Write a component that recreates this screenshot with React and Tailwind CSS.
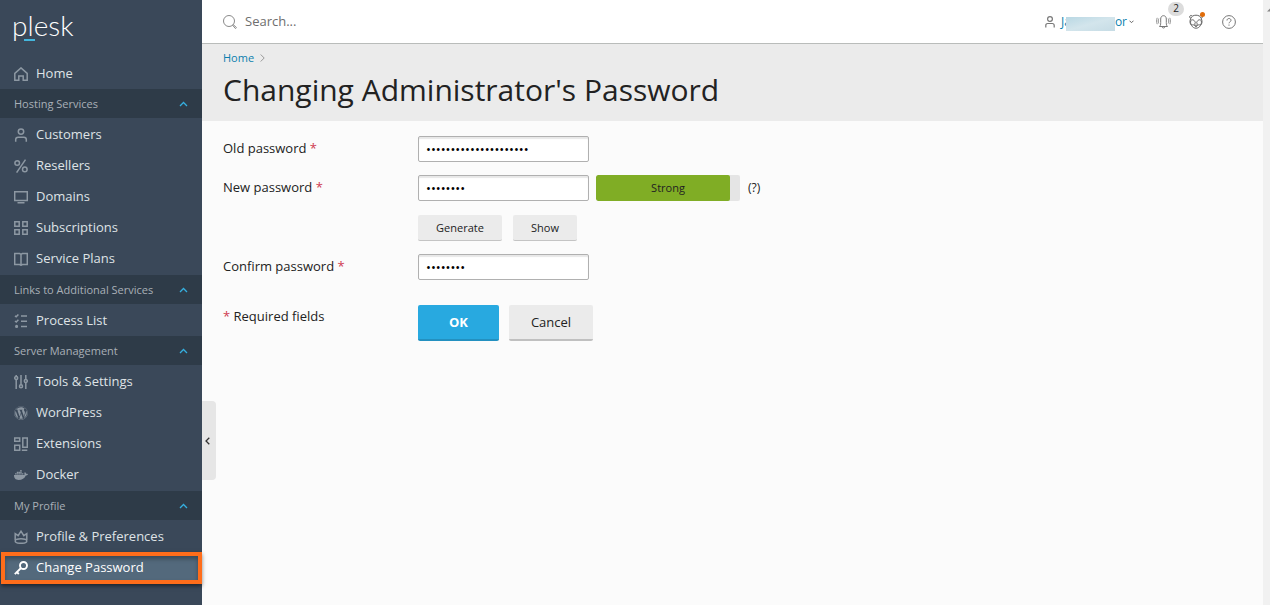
import React from 'react';
import { FaWordpress, FaDocker } from 'react-icons/fa';

const iconProps = {
  width: 14,
  height: 14,
  viewBox: '0 0 14 14',
  fill: 'none',
  stroke: 'currentColor',
  strokeWidth: 1.5,
  className: 'shrink-0',
  'aria-hidden': true
};

const HomeIcon = () => (
  <svg {...iconProps}>
    <path d="M.8 13.2V6.4L7 .9l6.2 5.5v6.8H9.2V9H4.8v4.2z" />
  </svg>
);

const UserIcon = () => (
  <svg {...iconProps}>
    <circle cx="7" cy="3.6" r="2.7" />
    <path d="M1.7 13.8v-2.3c0-1.4 1-2.3 2.4-2.3h5.8c1.4 0 2.4.9 2.4 2.3v2.3" />
  </svg>
);

const PercentIcon = () => (
  <svg {...iconProps}>
    <circle cx="3.2" cy="4" r="2.3" />
    <circle cx="10.8" cy="10.4" r="2.3" />
    <path d="M11.5.6 2.6 13.6" />
  </svg>
);

const ScreenIcon = () => (
  <svg {...iconProps}>
    <path d="M.7 1.7h12.6v8.8H.7zM3.5 12.7h7" />
  </svg>
);

const GridIcon = () => (
  <svg {...iconProps}>
    <path d="M.8.8h4.4v4.4H.8zM8.8.8h4.4v4.4H8.8zM.8 8.8h4.4v4.4H.8zM8.8 8.8h4.4v4.4H8.8z" />
  </svg>
);

const BookIcon = () => (
  <svg {...iconProps}>
    <path d="M.7 1.5h5l1.3.8 1.3-.8h5v11h-5l-1.3.8-1.3-.8h-5zM7 2.3v11" />
  </svg>
);

const ListIcon = () => (
  <svg {...iconProps}>
    <path d="M7 2h6M7 7.2h6M7 12.4h6M1 1.8l1.2 1L4.4.5M1 7l1.2 1 2.2-2.3" />
    <circle cx="2.6" cy="12.4" r=".8" />
  </svg>
);

const SlidersIcon = () => (
  <svg {...iconProps}>
    <circle cx="2.2" cy="3" r="1.5" />
    <circle cx="7" cy="11.3" r="1.5" />
    <circle cx="11.8" cy="6" r="1.5" />
    <path d="M2.2 4.5V14M2.2 0v1.5M7 0v9.8M11.8 0v4.5M11.8 7.5V14" />
  </svg>
);

const ExtensionsIcon = () => (
  <svg {...iconProps}>
    <path d="M.7.9h5v3.4h-5zM.7 8.2h5v5h-5zM8.8.9h4.5v9.3H8.8zM7.8 13.2h5.5" />
  </svg>
);

const CrownIcon = () => (
  <svg {...iconProps}>
    <path d="M1.2 10V3.6l3 2L7 1.2l2.8 4.4 3-2V10" />
    <ellipse cx="7" cy="11" rx="5.8" ry="2.3" />
  </svg>
);

const KeyIcon = () => (
  <svg {...iconProps} strokeWidth="1.9">
    <circle cx="9.5" cy="4.5" r="3.5" />
    <path d="M7 7 .8 13.2M2.2 10.4l2.6 2.6" />
  </svg>
);

const WordPressIcon = () => <FaWordpress size={14} className="shrink-0" aria-hidden />;
const DockerIcon = () => <FaDocker size={14} className="shrink-0" aria-hidden />;

const sections = [
  {
    title: 'Hosting Services',
    items: [
      { label: 'Customers', icon: UserIcon },
      { label: 'Resellers', icon: PercentIcon },
      { label: 'Domains', icon: ScreenIcon },
      { label: 'Subscriptions', icon: GridIcon },
      { label: 'Service Plans', icon: BookIcon }
    ]
  },
  {
    title: 'Links to Additional Services',
    items: [{ label: 'Process List', icon: ListIcon }]
  },
  {
    title: 'Server Management',
    items: [
      { label: 'Tools & Settings', icon: SlidersIcon },
      { label: 'WordPress', icon: WordPressIcon },
      { label: 'Extensions', icon: ExtensionsIcon },
      { label: 'Docker', icon: DockerIcon }
    ]
  },
  {
    title: 'My Profile',
    items: [
      { label: 'Profile & Preferences', icon: CrownIcon },
      { label: 'Change Password', icon: KeyIcon, active: true }
    ]
  }
];

const NavItem = ({ label, icon: Icon, active }) => (
  <a
    href="#"
    className={`flex items-center gap-2 text-[13px] ${
      active
        ? 'ml-px h-8 border-4 border-[#ff6d1a] bg-[#53697c] pl-[9px] text-white shadow-[0_2px_4px_rgba(0,0,0,0.5),inset_0_3px_4px_rgba(0,0,0,0.3)]'
        : 'h-[31px] pl-3.5 text-[#dfe3e6]'
    }`}
  >
    <span className={active ? 'text-white' : 'text-[#8d98a3]'}>
      <Icon />
    </span>
    {label}
  </a>
);

const Sidebar = () => (
  <aside className="relative w-[202px] shrink-0 bg-[#3a4859]">
    <a href="#" aria-label="plesk" className="block h-[58px] pt-[7px] pl-3 text-white">
      <span className="relative inline-block font-['Lato'] text-[28px] leading-9 font-light">
        plesk
        <span className="absolute bottom-0.5 left-3 h-0.5 w-[11px] bg-[#44b6dd]" />
      </span>
    </a>
    <nav>
      <NavItem label="Home" icon={HomeIcon} />
      {sections.map((section) => (
        <section key={section.title}>
          <button
            type="button"
            className="flex h-[29px] w-full items-center justify-between bg-[#2e3b48] px-3.5 pt-px text-[11px] text-[#a9b0b7]"
          >
            {section.title}
            <svg width="9" height="6" viewBox="0 0 9 6" fill="none" stroke="#35b0e0" strokeWidth="1.3" aria-hidden="true">
              <path d="M1 5l3.5-3.5L8 5" />
            </svg>
          </button>
          <ul className={section.items.length > 1 ? 'py-px' : 'pt-px'}>
            {section.items.map((item) => (
              <li key={item.label}>
                <NavItem {...item} />
              </li>
            ))}
          </ul>
        </section>
      ))}
    </nav>
    <button
      type="button"
      aria-label="Collapse sidebar"
      className="absolute top-[401px] left-full flex h-[79px] w-3.5 items-center rounded-r-sm bg-[#e6e6e6] pl-[3px]"
    >
      <svg width="5" height="8" viewBox="0 0 5 8" fill="none" stroke="#333" strokeWidth="1.3" aria-hidden="true">
        <path d="M4.3.7 1 4l3.3 3.3" />
      </svg>
    </button>
  </aside>
);

const TopBar = () => (
  <header className="flex h-11 items-center border-b border-[#b9bcba] bg-white pr-[27px] pl-[21px] shadow-[0_1px_1px_#dcdcdc]">
    <label className="flex flex-1 items-center gap-2">
      <svg width="14" height="14" viewBox="0 0 14 14" fill="none" stroke="#8a8a8a" aria-hidden="true">
        <circle cx="6" cy="6" r="5.5" />
        <path d="m10 9.4 3.5 3.2-1 1L9.4 10" />
      </svg>
      <input
        type="search"
        aria-label="Search"
        placeholder="Search..."
        className="w-60 bg-transparent text-[13px] outline-none placeholder:text-[#6e6e6e]"
      />
    </label>
    <button type="button" aria-label="Account menu" className="flex items-center text-[12px] text-[#0b7fae]">
      <svg className="mr-1.5" width="10" height="12" viewBox="0 0 10 12" fill="none" stroke="#777" strokeWidth="1.2" aria-hidden="true">
        <circle cx="5" cy="3" r="2.4" />
        <path d="M.8 11.5v-2c0-1.300.9-2 2-2h4.400c1.100 0 2 .7 2 2v2" />
      </svg>
      Ja
      <span className="-ml-[5px] mt-1 h-3.5 w-[49px] bg-linear-to-br from-[#b9d8e4] via-[#d3e5ec] to-[#c6dce5]" />
      or
      <svg className="ml-0.5" width="5" height="4" viewBox="0 0 5 4" fill="none" stroke="#666" aria-hidden="true">
        <path d="M.5.7l2 2 2-2" />
      </svg>
    </button>
    <button type="button" aria-label="Notifications" className="relative ml-[22px]">
      <svg width="15" height="14" viewBox="0 0 15 14" fill="none" stroke="#777" aria-hidden="true">
        <path d="M3.5 11.5c1-1 1.2-2 1.2-4V4C4.7 2 5.8.7 7.5.7S10.300 2 10.300 4v3.500c0 2 .2 3 1.200 4zM6 11.500c0 2 3 2 3 0" />
        <path d="M2.800 3.500c-.7 1.500-.7 3.500 0 5M12.200 3.500c.7 1.500.7 3.500 0 5M1.200 2.800C.4 5 .4 7 1.200 9.200M13.800 2.800c.8 2.200.8 4.200 0 6.400" strokeWidth=".8" />
      </svg>
      <span className="absolute -top-[13px] left-3 flex h-3.5 w-4 items-center justify-center rounded-full bg-[#dcdcdc] text-[10px] text-[#222]">
        2
      </span>
    </button>
    <button type="button" aria-label="Advisor" className="relative ml-[18px]">
      <svg width="14" height="15" viewBox="0 0 14 15" fill="none" stroke="#666" aria-hidden="true">
        <path d="M3.200 2C2 .8.500 1.600.700 3c.1.800.5 1.200 1 1.500M10.800 2c1.200-1.200 2.700-.4 2.500 1-.1.800-.5 1.200-1 1.500M1.700 4.500C2.600 2.200 4.500 1.200 7 1.200s4.400 1 5.300 3.300c1.200 2.800.9 5-.8 7-1.300 1.900-2.700 2.700-4.500 2.700s-3.200-.8-4.500-2.700c-1.700-2-2-4.200-.8-7z" />
        <path d="M6.300 8.500C5.500 6 3.500 5 1.800 6.500c-.8 2.500.2 4.500 2 4.500 1.300 0 2.200-1 2.500-2.500zM7.700 8.500c.8-2.500 2.800-3.500 4.500-2 .8 2.500-.2 4.500-2 4.500-1.300 0-2.200-1-2.500-2.500zM5.300 11.200h3.400L7 12.800z" />
      </svg>
      <span className="absolute -top-0.5 -right-0.5 size-[5px] rounded-full bg-[#e06c0a]" />
    </button>
    <button type="button" aria-label="Help" className="ml-[19px]">
      <svg width="14" height="14" viewBox="0 0 14 14" fill="none" stroke="#777" aria-hidden="true">
        <circle cx="7" cy="7" r="6.4" />
        <path d="M5 5.500C5 4.200 5.900 3.500 7 3.500s2 .7 2 1.900c0 1.300-2 1.500-2 2.900M7 9.500v1.200" />
      </svg>
    </button>
  </header>
);

const inputClass =
  'h-[26px] w-[171px] rounded-xs border border-[#b0b0b0] bg-white px-[7px] text-[13px] text-black shadow-[inset_0_2px_1px_#e8e8e8] outline-none';
const smallButtonClass =
  'h-[26px] rounded-xs border-b border-[#c4c4c4] bg-[#ebebeb] pt-px text-[11px] font-medium text-[#222]';

const Required = () => <span className="text-[#cf3a50]">*</span>;

const Row = ({ id, label, children }) => (
  <div className="flex">
    <label htmlFor={id} className="w-[195px] shrink-0 pt-0.5 leading-5">
      {label} <Required />
    </label>
    {children}
  </div>
);

const PasswordForm = () => (
  <form className="px-[21px] pt-[15px] text-[13px] text-[#222]" onSubmit={(e) => e.preventDefault()}>
    <Row id="old" label="Old password">
      <input id="old" type="password" defaultValue="aaaaaaaaaaaaaaaaaaaaa" className={inputClass} />
    </Row>
    <div className="mt-[13px]">
      <Row id="new" label="New password">
        <div>
          <div className="flex items-center">
            <input id="new" type="password" defaultValue="aaaaaaaa" className={inputClass} />
            <div className="relative ml-[7px] h-[26px] w-36 overflow-hidden rounded-xs bg-[#e5e5e5] text-center text-[11px] leading-[26px]">
              <div className="absolute inset-y-0 left-0 w-[134px] rounded-xs bg-[#80ad25]" />
              <span className="relative">Strong</span>
            </div>
            <span className="ml-2 text-[12px]">(?)</span>
          </div>
          <div className="mt-3.5 flex gap-[11px]">
            <button type="button" className={`${smallButtonClass} w-[84px]`}>Generate</button>
            <button type="button" className={`${smallButtonClass} w-16`}>Show</button>
          </div>
        </div>
      </Row>
    </div>
    <div className="mt-[13px]">
      <Row id="confirm" label="Confirm password">
        <input id="confirm" type="password" defaultValue="aaaaaaaa" className={inputClass} />
      </Row>
    </div>
    <div className="mt-[25px] flex">
      <p className="w-[195px] shrink-0 pt-px leading-5">
        <Required /> Required fields
      </p>
      <div className="flex gap-2.5">
        <button type="submit" className="h-9 w-[81px] rounded-xs border-b-2 border-[#2390c0] bg-[#28a9e0] pt-px text-[13px] font-bold text-white">
          OK
        </button>
        <button type="button" className="h-9 w-[84px] rounded-xs border-b-2 border-[#c0c0c0] bg-[#ebebeb] pt-px text-[13px] font-medium">
          Cancel
        </button>
      </div>
    </div>
  </form>
);

const App = () => (
  <div className="flex min-h-screen bg-[#fbfbfb] font-['Open_Sans',sans-serif]">
    <Sidebar />
    <div className="min-w-0 flex-1">
      <TopBar />
      <div className="bg-[#ebebeb] px-[21px] pt-[5px] pb-[11px]">
        <nav aria-label="Breadcrumb" className="flex items-center gap-1.5 text-[11px] leading-[18px]">
          <a href="#" className="text-[#0b7fae]">Home</a>
          <svg width="5" height="8" viewBox="0 0 5 8" fill="none" stroke="#999" aria-hidden="true">
            <path d="M.7.5 4.200 4 .7 7.500" />
          </svg>
        </nav>
        <h1 className="mt-[3px] text-[30px] leading-10 font-medium text-[#222]">Changing Administrator's Password</h1>
      </div>
      <main>
        <PasswordForm />
      </main>
    </div>
    <div className="w-[7px] shrink-0 bg-[#f1f1f1]">
      <svg className="mt-2 ml-auto" width="3" height="4" viewBox="0 0 3 4" fill="#888" aria-hidden="true">
        <path d="M0 3.500 3 .5v3z" />
      </svg>
    </div>
  </div>
);

export default App;
